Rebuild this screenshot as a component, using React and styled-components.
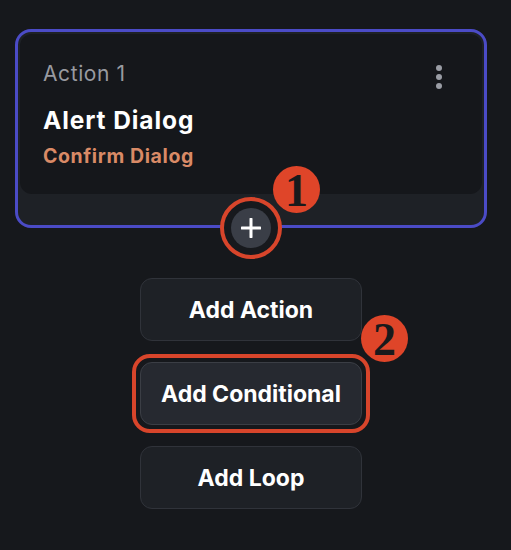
import React from "react";
import styled, { createGlobalStyle } from "styled-components";

const GlobalStyle = createGlobalStyle`
  html, body {
    margin: 0;
    padding: 0;
    background: #16181c;
  }
  body {
    font-family: Inter, "Open Sans", sans-serif;
  }
`;

const Page = styled.div`
  width: 511px;
  height: 550px;
  box-sizing: border-box;
  padding: 29px 0 0 15px;
  background: #16181c;
  position: relative;
  overflow: hidden;
`;

const Column = styled.div`
  width: 472px;
  display: flex;
  flex-direction: column;
  align-items: center;
`;

// blue selection frame round the action card
const Frame = styled.div`
  width: 100%;
  box-sizing: border-box;
  height: 199px;
  border: 3px solid #4b4bc6;
  border-radius: 16px;
  background: #1e2126;
  padding: 2px;
`;

const Card = styled.div`
  height: 160px;
  box-sizing: border-box;
  background: #15171b;
  border-radius: 12px;
  padding: 27px 23px 0 23px;
  display: flex;
  justify-content: space-between;
`;

const CardText = styled.div`
  display: flex;
  flex-direction: column;
`;

const Label = styled.div`
  color: #989aa0;
  font-size: 21px;
  line-height: 26px;
  letter-spacing: 0.6px;
`;

const Title = styled.div`
  color: #ffffff;
  font-size: 24.5px;
  font-weight: 700;
  line-height: 30px;
  margin-top: 18px;
  letter-spacing: 0.9px;
`;

const Subtitle = styled.div`
  color: #d98a66;
  font-size: 19.5px;
  font-weight: 700;
  line-height: 24px;
  margin-top: 9px;
  letter-spacing: 0.6px;
`;

const Kebab = styled.div`
  display: flex;
  flex-direction: column;
  gap: 3px;
  padding: 4px 17px 0 0;
  span {
    width: 6px;
    height: 6px;
    border-radius: 50%;
    background: #9a9da5;
  }
`;

const PlusWrap = styled.div`
  position: relative;
  margin-top: -20px;
  width: 40px;
  height: 40px;
`;

const PlusButton = styled.div`
  width: 40px;
  height: 40px;
  border-radius: 50%;
  background: #3a3e47;
  box-shadow: 0 0 0 8px #17191d;
  display: flex;
  align-items: center;
  justify-content: center;
`;

const Ring = styled.div`
  position: absolute;
  left: ${(p) => p.$inset}px;
  top: ${(p) => p.$inset}px;
  right: ${(p) => p.$inset}px;
  bottom: ${(p) => p.$inset}px;
  border: 4px solid #d8452b;
  border-radius: ${(p) => p.$radius};
  pointer-events: none;
`;

const Badge = styled.div`
  position: absolute;
  left: ${(p) => p.$x}px;
  top: ${(p) => p.$y}px;
  width: 47px;
  height: 47px;
  border-radius: 50%;
  background: #df4529;
  color: #191a1c;
  font-family: "Liberation Serif", serif;
  font-weight: 700;
  font-size: 46px;
  line-height: 50px;
  text-align: center;
`;

const Actions = styled.div`
  margin-top: 30px;
  display: flex;
  flex-direction: column;
  gap: 21px;
  align-items: center;
`;

const ActionWrap = styled.div`
  position: relative;
`;

const ActionButton = styled.button`
  width: 222px;
  height: 63px;
  box-sizing: border-box;
  border-radius: 12px;
  border: 1.5px solid ${(p) => (p.$active ? "#3b3e45" : "#30333a")};
  background: ${(p) => (p.$active ? "#262930" : "#1e2126")};
  color: #ffffff;
  font-family: Inter, "Open Sans", sans-serif;
  font-size: 23px;
  font-weight: 700;
  cursor: pointer;
`;

export default function App() {
  return (
    <Page>
      <GlobalStyle />
      <Column>
        <Frame>
          <Card>
            <CardText>
              <Label>Action 1</Label>
              <Title>Alert Dialog</Title>
              <Subtitle>Confirm Dialog</Subtitle>
            </CardText>
            <Kebab>
              <span />
              <span />
              <span />
            </Kebab>
          </Card>
        </Frame>
        <PlusWrap>
          <PlusButton>
            <svg width="20" height="20" viewBox="0 0 20 20">
              <path
                d="M10 1v18M1 10h18"
                stroke="#ffffff"
                strokeWidth="3"
                strokeLinecap="round"
              />
            </svg>
          </PlusButton>
          <Ring $inset={-11} $radius="50%" />
          <Badge $x={42} $y={-42}>1</Badge>
        </PlusWrap>
        <Actions>
          <ActionButton>Add Action</ActionButton>
          <ActionWrap>
            <ActionButton $active>Add Conditional</ActionButton>
            <Ring $inset={-8} $radius="18px" />
            <Badge $x={221} $y={-47}>2</Badge>
          </ActionWrap>
          <ActionButton>Add Loop</ActionButton>
        </Actions>
      </Column>
    </Page>
  );
}
